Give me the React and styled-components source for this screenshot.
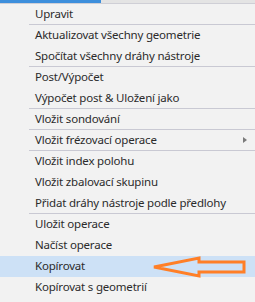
import React from "react";
import styled, { createGlobalStyle } from "styled-components";

const GlobalStyle = createGlobalStyle`
  html, body {
    margin: 0;
    padding: 0;
    background: #f2f2f2;
  }
  body {
    font-family: "Noto Sans", "Liberation Sans", sans-serif;
  }
`;

const Page = styled.div`
  width: 255px;
  height: 302px;
  overflow: hidden;
  position: relative;
  background: #f2f2f2;
`;

const TopStrip = styled.div`
  display: flex;
  height: 3px;
`;

const TopSelected = styled.div`
  width: 101px;
  background: #3d8fdc;
`;

const TopRest = styled.div`
  flex: 1;
  background: #e4e4e4;
`;

const Menu = styled.ul`
  list-style: none;
  margin: 0;
  padding: 0;
  border-top: 1px solid #cfcfd6;
  background: #f2f2f2;
`;

const Item = styled.li`
  position: relative;
  height: 20px;
  line-height: 20px;
  padding-left: 35px;
  font-size: 11.5px;
  letter-spacing: -0.2px;
  color: #2b2b2b;
  white-space: nowrap;
  background: ${(p) => (p.$active ? "#cde1f6" : "transparent")};
  border-bottom: 1px solid ${(p) => (p.$active ? "#cde1f6" : "transparent")};

  &::after {
    content: "";
    display: ${(p) => (p.$sep ? "block" : "none")};
    position: absolute;
    left: 29px;
    right: 0;
    bottom: -1px;
    height: 1px;
    background: #c9c9d3;
  }
`;

const SubArrow = styled.span`
  position: absolute;
  right: 8px;
  top: 7px;
  width: 0;
  height: 0;
  border-top: 3px solid transparent;
  border-bottom: 3px solid transparent;
  border-left: 4px solid #7a7a7a;
`;

const Callout = styled.svg`
  position: absolute;
  left: 0;
  top: 0;
  pointer-events: none;
`;

const items = [
  { label: "Upravit", sep: true },
  { label: "Aktualizovat všechny geometrie" },
  { label: "Spočítat všechny dráhy nástroje", sep: true },
  { label: "Post/Výpočet" },
  { label: "Výpočet post & Uložení jako", sep: true },
  { label: "Vložit sondování", sep: true },
  { label: "Vložit frézovací operace", sep: true, sub: true },
  { label: "Vložit index polohu" },
  { label: "Vložit zbalovací skupinu" },
  { label: "Přidat dráhy nástroje podle předlohy", sep: true },
  { label: "Uložit operace" },
  { label: "Načíst operace" },
  { label: "Kopírovat", active: true },
  { label: "Kopírovat s geometrií" },
];

export default function App() {
  return (
    <Page>
      <GlobalStyle />
      <TopStrip>
        <TopSelected />
        <TopRest />
      </TopStrip>
      <Menu>
        {items.map((it) => (
          <Item key={it.label} $sep={it.sep} $active={it.active}>
            {it.label}
            {it.sub && <SubArrow />}
          </Item>
        ))}
      </Menu>
      <Callout width="255" height="302" viewBox="0 0 255 302">
        <polygon
          points="154,267 199,258 199,262 244,262 244,272 199,272 199,276"
          fill="none"
          stroke="#ff7f27"
          strokeWidth="3"
          strokeLinejoin="miter"
        />
      </Callout>
    </Page>
  );
}
